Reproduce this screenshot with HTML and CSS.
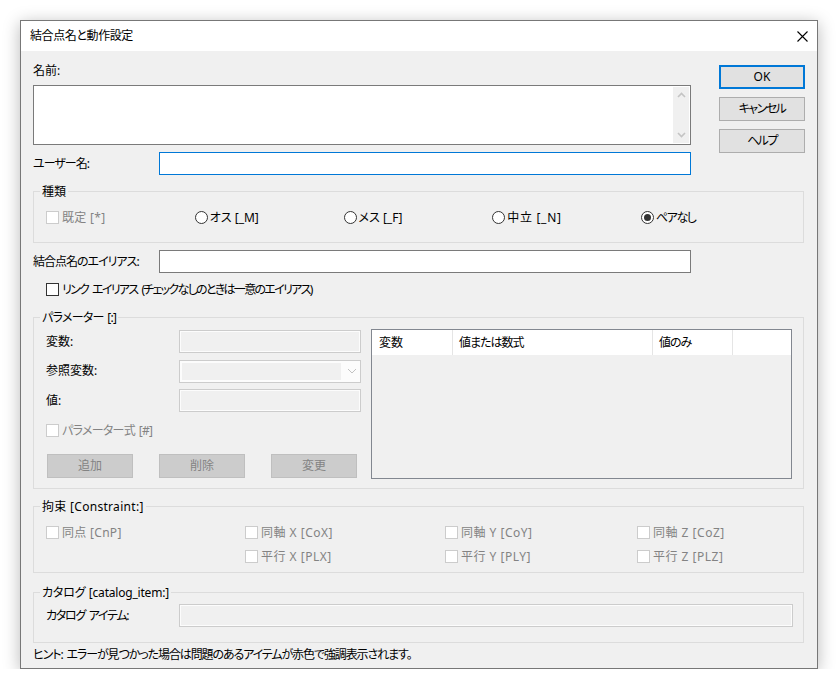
FILE: index.html
```html
<!DOCTYPE html>
<html lang="ja">
<head>
<meta charset="utf-8">
<title>結合点名と動作設定</title>
<link rel="stylesheet" href="styles.css">
</head>
<body>
<div class="dialog">
  <div class="titlebar">
    <span class="title">結合点名と動作設定</span>
    <svg class="close" width="11" height="11" viewBox="0 0 11 11"><path d="M0.5 0.5L10.5 10.5M10.5 0.5L0.5 10.5" stroke="#000" stroke-width="1.1" fill="none"/></svg>
  </div>
  <div class="content">
    <div class="top">
      <div class="top-main">
        <div class="label">名前:</div>
        <div class="memo">
          <div class="vscroll">
            <svg width="9" height="6" viewBox="0 0 9 6"><path d="M1 5L4.5 1.5L8 5" stroke="#c4c4c4" stroke-width="1.6" fill="none"/></svg>
            <svg width="9" height="6" viewBox="0 0 9 6"><path d="M1 1L4.5 4.5L8 1" stroke="#c4c4c4" stroke-width="1.6" fill="none"/></svg>
          </div>
        </div>
        <div class="field-row">
          <span class="field-label ls-n10">ユーザー名:</span>
          <div class="input focus"></div>
        </div>
      </div>
      <div class="buttons">
        <button class="btn default">OK</button>
        <button class="btn ls-n15">キャンセル</button>
        <button class="btn ls-n15">ヘルプ</button>
      </div>
    </div>

    <fieldset class="group group-kind">
      <legend>種類</legend>
      <div class="kind-row">
        <span class="check disabled ls-p03"><span class="box"></span>既定 [*]</span>
        <span class="radio"><span class="circle"></span>オス [_M]</span>
        <span class="radio"><span class="circle"></span>メス [_F]</span>
        <span class="radio ls-p07"><span class="circle"></span>中立 [_N]</span>
        <span class="radio ls-n15"><span class="circle on"></span>ペアなし</span>
      </div>
    </fieldset>

    <div class="field-row alias-row">
      <span class="field-label ls-n10">結合点名のエイリアス:</span>
      <div class="input plain"></div>
    </div>

    <div class="link-row">
      <span class="check ls-n17"><span class="box"></span>リンク エイリアス (チェックなしのときは一意のエイリアス)</span>
    </div>

    <fieldset class="group group-param">
      <legend class="ls-n07">パラメーター [:]</legend>
      <div class="param-body">
        <div class="param-left">
          <div class="param-grid">
            <span class="field-label">変数:</span>
            <div class="input disabled-input"></div>
            <span class="field-label">参照変数:</span>
            <div class="combo">
              <div class="combo-inner"></div>
              <svg width="10" height="6" viewBox="0 0 10 6"><path d="M1 1L5 5L9 1" stroke="#c2c2c2" stroke-width="1" fill="none"/></svg>
            </div>
            <span class="field-label">値:</span>
            <div class="input disabled-input"></div>
          </div>
          <div class="formula-row">
            <span class="check disabled ls-n07"><span class="box"></span>パラメーター式 [#]</span>
          </div>
          <div class="param-buttons">
            <button class="btn disabled-btn">追加</button>
            <button class="btn disabled-btn">削除</button>
            <button class="btn disabled-btn">変更</button>
          </div>
        </div>
        <div class="list">
          <div class="list-header">
            <span class="col col-1">変数</span>
            <span class="col col-2 ls-n10">値または数式</span>
            <span class="col col-3 ls-n10">値のみ</span>
            <span class="col col-4"></span>
          </div>
        </div>
      </div>
    </fieldset>

    <fieldset class="group group-constraint">
      <legend class="ls-p03">拘束 [Constraint:]</legend>
      <div class="constraint-grid">
        <span class="check disabled ls-p03"><span class="box"></span>同点 [CnP]</span>
        <span class="check disabled ls-p05"><span class="box"></span>同軸 X [CoX]</span>
        <span class="check disabled ls-p05"><span class="box"></span>同軸 Y [CoY]</span>
        <span class="check disabled ls-p05"><span class="box"></span>同軸 Z [CoZ]</span>
        <span></span>
        <span class="check disabled ls-p05"><span class="box"></span>平行 X [PLX]</span>
        <span class="check disabled ls-p05"><span class="box"></span>平行 Y [PLY]</span>
        <span class="check disabled ls-p05"><span class="box"></span>平行 Z [PLZ]</span>
      </div>
    </fieldset>

    <fieldset class="group group-catalog">
      <legend class="ls-n02">カタログ [catalog_item:]</legend>
      <div class="catalog-row">
        <span class="field-label ls-n13">カタログ アイテム:</span>
        <div class="input disabled-input"></div>
      </div>
    </fieldset>

    <div class="hint ls-n11">ヒント: エラーが見つかった場合は問題のあるアイテムが赤色で強調表示されます。</div>
  </div>
</div>
</body>
</html>
```

FILE: styles.css
```css
* { box-sizing: border-box; }

html, body {
  margin: 0;
  padding: 0;
  background: #ffffff;
}

body {
  padding: 20px 0 0 20px;
  font-family: "Noto Sans", "Noto Sans CJK JP", sans-serif;
  font-size: 12px;
  line-height: 16px;
  color: #000;
  font-feature-settings: "palt";
}

/* tracking tweaks to approach the Windows UI font widths
   (narrow kana, wider latin) */
.ls-n02 { letter-spacing: -0.2px; word-spacing: 0.5px; }
.ls-n07 { letter-spacing: -0.7px; word-spacing: 1.2px; }
.ls-n10 { letter-spacing: -1px; word-spacing: 1.5px; }
.ls-n11 { letter-spacing: -1.1px; word-spacing: 2px; }
.ls-n13 { letter-spacing: -1.3px; word-spacing: 2px; }
.ls-n15 { letter-spacing: -1.5px; word-spacing: 2px; }
.ls-n17 { letter-spacing: -1.7px; word-spacing: 2.5px; }
.ls-p03 { letter-spacing: 0.3px; }
.ls-p05 { letter-spacing: 0.5px; }
.ls-p07 { letter-spacing: 0.7px; }

.dialog {
  width: 798px;
  height: 649px;
  border: 1px solid #777777;
  background: #f0f0f0;
  box-shadow: 0 3px 16px rgba(0, 0, 0, 0.28);
  display: flex;
  flex-direction: column;
}

.titlebar {
  height: 30px;
  background: #ffffff;
  display: flex;
  align-items: center;
  justify-content: space-between;
  padding: 0 9px 0 9px;
  flex: none;
}

.title {
  font-size: 12px;
  letter-spacing: -0.4px;
  color: #000;
}

.close { display: block; }

.content {
  padding: 12px 13px 0 12px;
  display: flex;
  flex-direction: column;
}

/* top area */
.top {
  display: flex;
  gap: 28px;
  margin-right: -2px;
}

.top-main {
  width: 658px;
  display: flex;
  flex-direction: column;
}

.label {
  height: 16px;
  margin-bottom: 6px;
}

.memo {
  height: 60px;
  border: 1px solid #7a7a7a;
  background: #ffffff;
  display: flex;
  justify-content: flex-end;
  padding: 1px;
}

.vscroll {
  width: 16px;
  background: #f0f0f0;
  display: flex;
  flex-direction: column;
  justify-content: space-between;
  align-items: center;
  padding: 5px 0 5px;
}

.vscroll svg { display: block; }

.field-row {
  display: flex;
  align-items: center;
  height: 23px;
  margin-top: 7px;
}

.field-label {
  width: 126px;
  flex: none;
  white-space: nowrap;
}

.input {
  flex: 1;
  height: 23px;
  background: #ffffff;
  border: 1px solid #7a7a7a;
}

.input.focus { border-color: #0078d7; }

.alias-row { width: 658px; }

.buttons {
  width: 86px;
  padding-top: 2px;
  display: flex;
  flex-direction: column;
  gap: 8px;
}

.btn {
  height: 24px;
  width: 86px;
  border: 1px solid #adadad;
  background: #e1e1e1;
  font-family: inherit;
  font-size: 12px;
  line-height: 16px;
  color: #000;
  padding: 0;
  font-feature-settings: "palt";
}

.btn.default { border: 2px solid #0078d7; }

.disabled-btn {
  background: #cccccc;
  border-color: #bfbfbf;
  color: #838383;
}

/* group boxes */
.group {
  margin: 0;
  padding: 0;
  border: 1px solid #dcdcdc;
  min-width: 0;
}

.group legend {
  padding: 0 2px;
  margin-left: 6px;
  line-height: 15px;
  height: 15px;
}

.group-kind { margin-top: 9px; }

.kind-row {
  display: grid;
  grid-template-columns: repeat(5, 148.75px);
  padding: 10px 0 17px 12px;
  height: 43px;
}

.check, .radio {
  display: inline-flex;
  align-items: center;
  height: 17px;
  white-space: nowrap;
}

.box {
  width: 13px;
  height: 13px;
  border: 1px solid #333333;
  background: #ffffff;
  margin-right: 3px;
  flex: none;
}

.check.disabled { color: #838383; }
.check.disabled .box { border-color: #cccccc; }

.circle {
  width: 13px;
  height: 13px;
  border: 1px solid #333333;
  border-radius: 50%;
  background: #ffffff;
  margin-right: 2px;
  flex: none;
  display: flex;
  align-items: center;
  justify-content: center;
}

.circle.on::after {
  content: "";
  width: 7px;
  height: 7px;
  border-radius: 50%;
  background: #333333;
}

.alias-row { margin-top: 7px; }

.link-row {
  margin-top: 8px;
  padding-left: 13px;
  height: 17px;
}

/* parameters */
.group-param { margin-top: 12px; }

.param-body {
  display: flex;
  gap: 10px;
  padding: 4px 10px 9px 12px;
}

.param-left {
  width: 315px;
  padding-top: 1px;
  display: flex;
  flex-direction: column;
}

.param-grid {
  display: grid;
  grid-template-columns: 133px 182px;
  row-gap: 6.5px;
  align-items: center;
}

.param-grid .field-label { width: auto; }

.disabled-input {
  height: 23px;
  border: 1px solid #cccccc;
  background: #f0f0f0;
  box-shadow: inset 0 0 0 1px #fcfcfc;
}

.combo {
  height: 23px;
  border: 1px solid #cccccc;
  background: #fcfcfc;
  display: flex;
  align-items: center;
  padding: 2px 3px 2px 2px;
  gap: 6px;
}

.combo-inner {
  flex: 1;
  align-self: stretch;
  background: #f0f0f0;
}

.combo svg { display: block; flex: none; }

.formula-row {
  margin-top: 10px;
  height: 17px;
}

.param-buttons {
  display: flex;
  gap: 26px;
  margin-top: 15px;
  padding-left: 1px;
}

.list {
  width: 421px;
  height: 150px;
  border: 1px solid #828790;
  background: #f0f0f0;
}

.list-header {
  display: flex;
  height: 25px;
  background: #ffffff;
}

.col {
  display: flex;
  align-items: center;
  padding-left: 6px;
  border-right: 1px solid #e5e5e5;
}

.col-1 { width: 81px; padding-left: 7px; }
.col-2 { width: 200px; }
.col-3 { width: 80px; }
.col-4 { flex: 1; border-right: none; }

/* constraints */
.group-constraint { margin-top: 10px; }

.constraint-grid {
  display: grid;
  grid-template-columns: 199px 200px 192px 1fr;
  row-gap: 7px;
  padding: 10px 0 7px 12px;
}

/* catalog */
.group-catalog { margin-top: 12px; }

.catalog-row {
  display: flex;
  align-items: center;
  padding: 4px 10px 15px 12px;
}

.catalog-row .field-label { width: 133px; }

.catalog-row .disabled-input { flex: 1; }

.hint {
  margin-top: 4px;
  height: 16px;
}
```
